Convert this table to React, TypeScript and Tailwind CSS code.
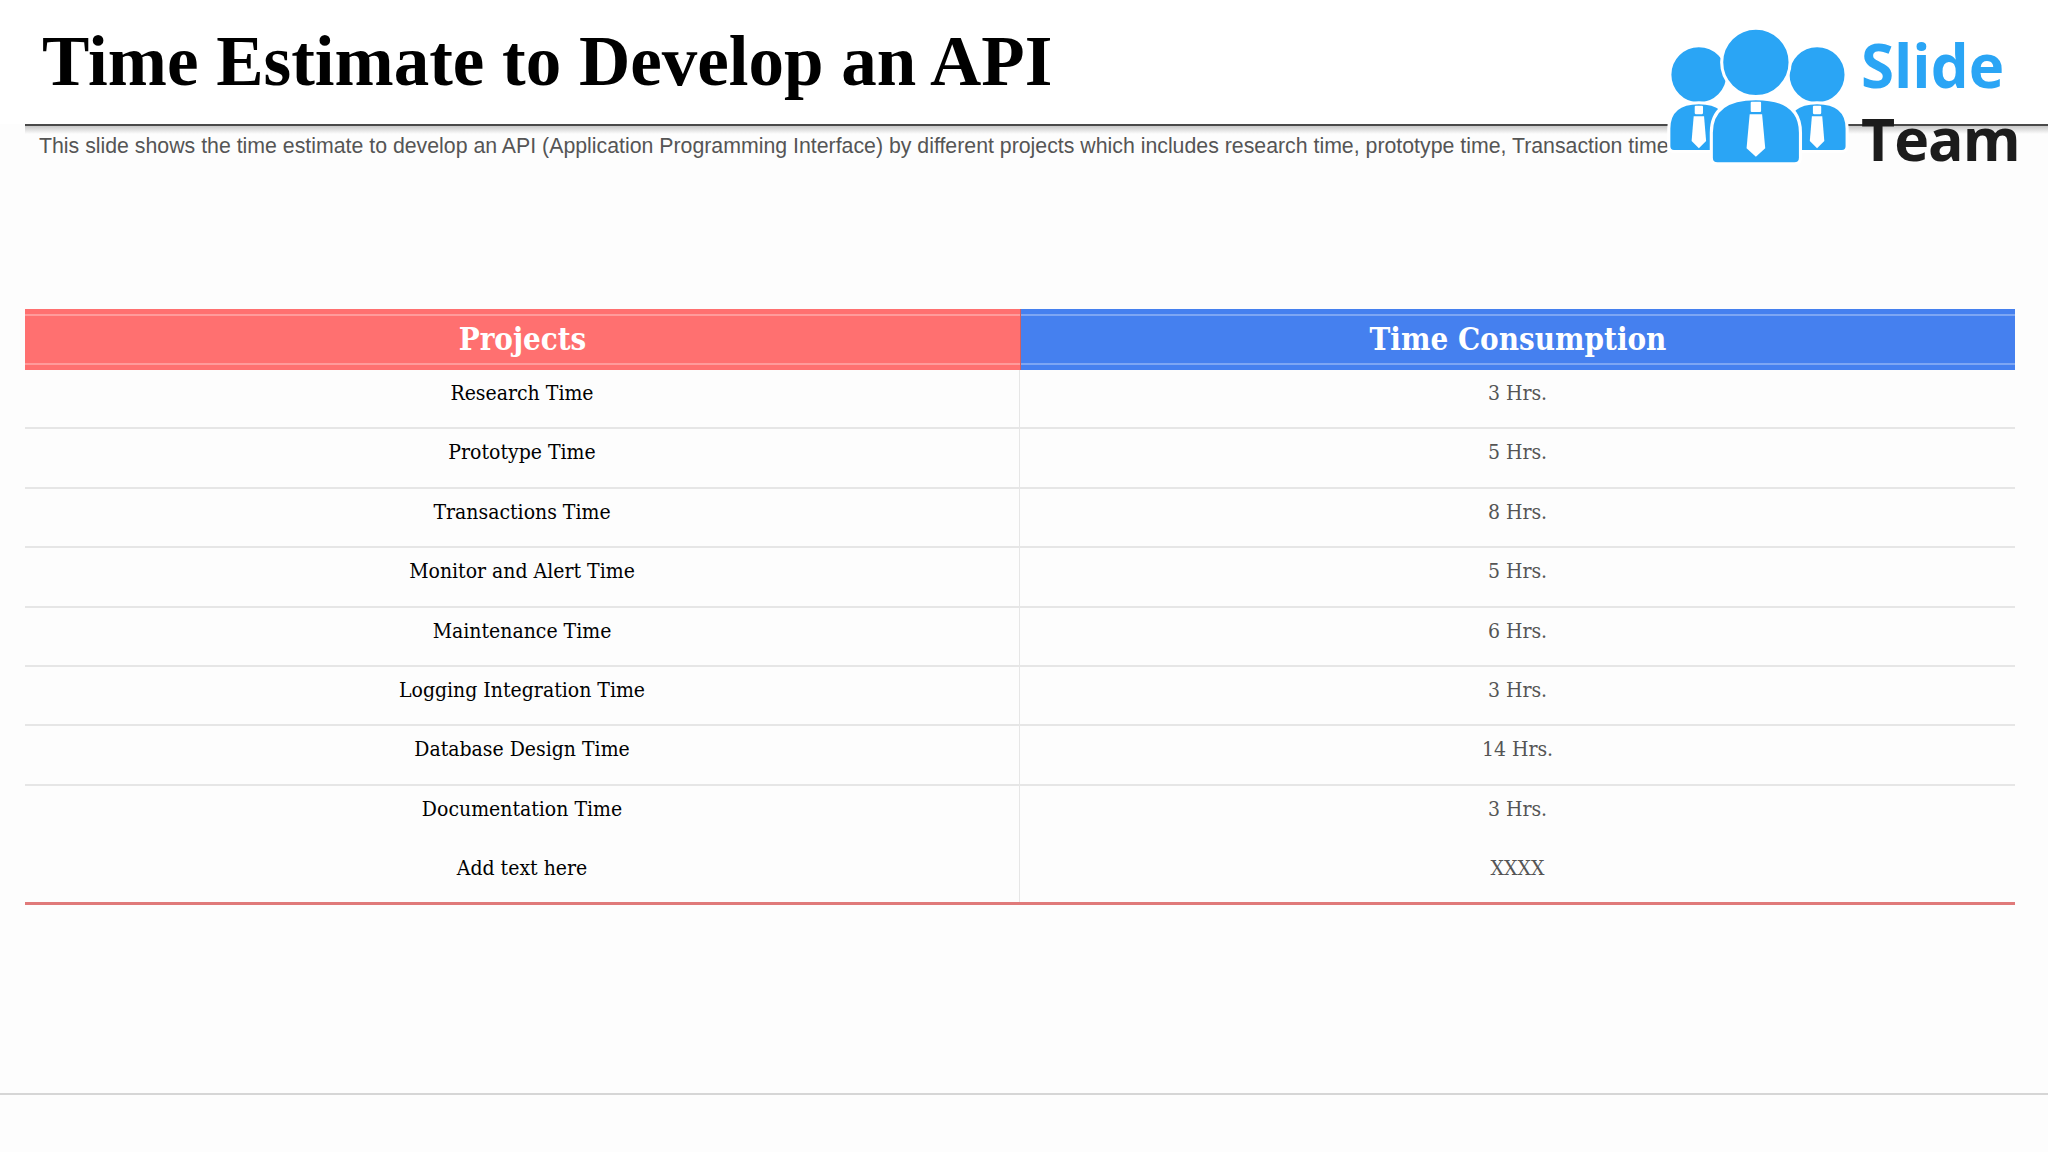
const rows: [string, string][] = [
  ['Research Time', '3 Hrs.'],
  ['Prototype Time', '5 Hrs.'],
  ['Transactions Time', '8 Hrs.'],
  ['Monitor and Alert Time', '5 Hrs.'],
  ['Maintenance Time', '6 Hrs.'],
  ['Logging Integration Time', '3 Hrs.'],
  ['Database Design Time', '14 Hrs.'],
  ['Documentation Time', '3 Hrs.'],
  ['Add text here', 'XXXX'],
];

const serif = "font-['DejaVu_Serif_Condensed','Liberation_Serif',serif]";

function Logo() {
  return (
    <div className="absolute left-[1640px] top-0 w-[408px] h-[190px]">
      <svg width="192" height="141" viewBox="0 0 184 136" className="absolute left-[23px] top-[26px]">
        <g fill="#2aa5f5" stroke="#ffffff" strokeWidth="3">
          <circle cx="34" cy="47" r="28" />
          <path d="M5,116 L5,99 Q5,74 34,74 Q63,74 63,99 L63,116 Q63,121 58,121 L10,121 Q5,121 5,116 Z" />
          <circle cx="148" cy="47" r="28" />
          <path d="M119,116 L119,99 Q119,74 148,74 Q177,74 177,99 L177,116 Q177,121 172,121 L124,121 Q119,121 119,116 Z" />
          <circle cx="89" cy="35" r="33" />
          <path d="M46,127 L46,103 Q46,70 89,70 Q132,70 132,103 L132,127 Q132,133 126,133 L52,133 Q46,133 46,127 Z" />
        </g>
        <g fill="#ffffff">
          <rect x="30" y="77" width="8" height="8" rx="1" />
          <path d="M29,87 L39,87 L41,111 L34,118 L27,111 Z" />
          <rect x="144" y="77" width="8" height="8" rx="1" />
          <path d="M143,87 L153,87 L155,111 L148,118 L141,111 Z" />
          <rect x="84" y="73" width="10" height="10" rx="1" />
          <path d="M83,85 L95,85 L98,118 L89,126 L80,118 Z" />
        </g>
      </svg>
      <div className="absolute left-[221px] top-[35px] font-['Open_Sans',sans-serif] font-bold text-[60px] leading-none text-[#2aa5f5]">
        Slide
      </div>
      <div className="absolute left-[221px] top-[109px] font-['Open_Sans',sans-serif] font-bold text-[59px] leading-none tracking-[-1px] text-[#1c1c1c]">
        Team
      </div>
    </div>
  );
}

export default function App() {
  return (
    <div className="relative w-[2048px] h-[1152px] bg-[#fdfdfd] overflow-hidden">
      {/* Title */}
      <div className="h-[124px] bg-white pl-[42px] pt-[21px]">
        <h1 className="font-['Liberation_Serif',serif] font-bold text-[71px] leading-[80px] text-black">
          Time Estimate to Develop an API
        </h1>
      </div>

      {/* Divider with shadow */}
      <div className="ml-[25px] h-[2px] bg-[#4a4a4a]" />
      <div className="ml-[25px] h-[8px] bg-gradient-to-b from-[#c8c8c8] to-transparent -mb-[8px]" />

      <p className="pl-[39px] pt-[8px] font-['Liberation_Sans',Arial,sans-serif] text-[21.3px] leading-[24px] text-[#555555] whitespace-nowrap">
        This slide shows the time estimate to develop an API (Application Programming Interface) by different projects which includes research time, prototype time, Transaction time
      </p>

      <Logo />

      {/* Table */}
      <div className="ml-[25px] mt-[151px] w-[1990px]">
        <div className={`flex h-[61px] ${serif} font-bold text-white text-[31px]`}>
          <div className="w-[995px] bg-[#ff7070] flex flex-col justify-between py-[5px]">
            <div className="h-[2px] bg-white/30" />
            <div className="text-center leading-none">Projects</div>
            <div className="h-[2px] bg-white/30" />
          </div>
          <div className="flex-1 bg-[#4580ef] border-l border-[#d06060] flex flex-col justify-between py-[5px]">
            <div className="h-[2px] bg-white/30" />
            <div className="text-center leading-none">Time Consumption</div>
            <div className="h-[2px] bg-white/30" />
          </div>
        </div>
        <div className="border-b-[3px] border-[#e07a7a]">
          {rows.map(([name, time], i) => (
            <div
              key={name}
              className={`flex ${i === rows.length - 1 ? 'h-[57px]' : 'h-[59.4px]'} ${serif} text-[21px] ${
                i < rows.length - 2 ? 'border-b-2 border-[#e6e6e6]' : ''
              }`}
            >
              <div className="w-[995px] border-r border-[#e6e6e6] text-center text-black pt-[8px]">{name}</div>
              <div className="flex-1 text-center text-[#555555] pt-[8px]">{time}</div>
            </div>
          ))}
        </div>
      </div>

      {/* Footer line */}
      <div className="absolute left-0 right-0 top-[1093px] h-[2px] bg-[#d6d6d6]" />
    </div>
  );
}
